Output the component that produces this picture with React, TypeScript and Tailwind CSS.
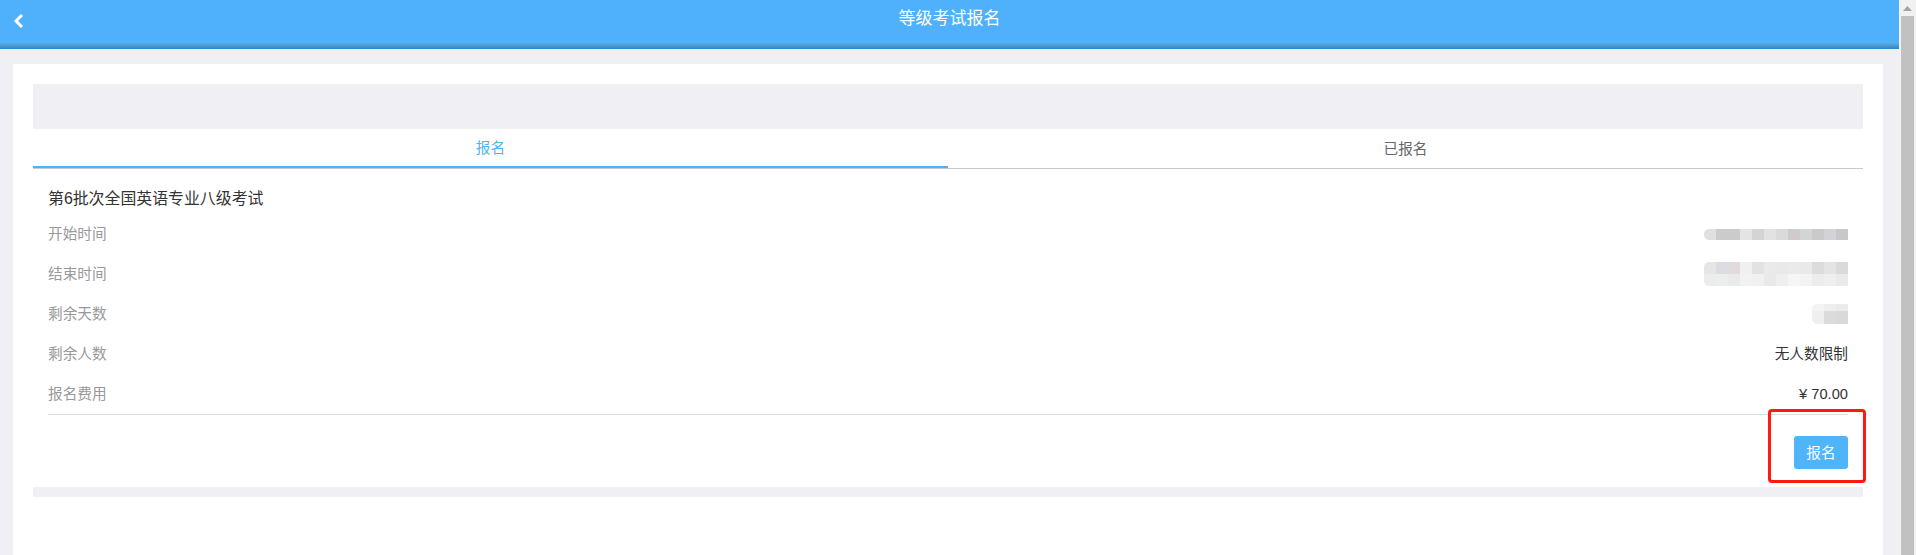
import React from "react"

const FONT = { fontFamily: '"Liberation Sans", "Noto Sans CJK SC", sans-serif' }

// blurred values in the screenshot, cell colours read off the reference
const START_TIME = [["#e2dfdc", "#cbcbcb", "#cbcbcb", "#e3e4e6", "#d3d5d5", "#e1e2e4", "#d9dbdb", "#d0cbc9", "#d3d4d4", "#c9cbcb", "#d2d3d6", "#c6c8ca"]]
const END_TIME = [
  ["#e8e6e5", "#dcdde0", "#dfdcdb", "#eef1f0", "#e1e3e3", "#e9eaea", "#e8eaea", "#e9eaea", "#e7e9ea", "#dcdcdc", "#e3e5e5", "#d9dadb"],
  ["#ececec", "#eceeed", "#e9ebeb", "#f1f3f2", "#f1f1f0", "#e9e9ea", "#efefef", "#f6f6f5", "#f3f3f3", "#ececec", "#efefef", "#e9eaea"],
]
const DAYS = [
  ["#f3f3f3", "#eeeeee", "#ebebeb"],
  ["#efefef", "#dcdbda", "#d8d9db"],
]

function Mosaic({ rows, heights }: { rows: string[][]; heights: number[] }) {
  return (
    <div className="flex flex-col rounded-l-[5px] overflow-hidden">
      {rows.map((row, i) => (
        <div key={i} className="flex">
          {row.map((c, j) => (
            <span key={j} className="block w-[12px]" style={{ background: c, height: heights[i] }} />
          ))}
        </div>
      ))}
    </div>
  )
}

function Row({ label, children }: { label: string; children: React.ReactNode }) {
  return (
    <div className="flex h-[40px] items-center justify-between">
      <span className="text-[14.67px] text-[#999999]">{label}</span>
      {children}
    </div>
  )
}

export default function App() {
  return (
    <div className="flex h-[555px] w-[1916px] overflow-hidden bg-[#efeff4]" style={FONT}>
      <div className="flex flex-1 flex-col">
        {/* header */}
        <div className="relative h-[43px] bg-[#4fb1fc]">
          <svg className="absolute left-[12px] top-[13px]" width="13" height="16" viewBox="0 0 13 16">
            <path d="M10 2 L4 8 L10 14" fill="none" stroke="#ffffff" strokeWidth="3" />
          </svg>
          <div className="text-center text-[17px] leading-[38px] text-white">等级考试报名</div>
        </div>
        <div className="h-[6px] bg-gradient-to-b from-[#66a8d4] to-[#1a88d6]" />

        <div className="flex flex-1 flex-col pl-[13px] pr-[16px] pt-[15px]">
          <div className="flex flex-1 flex-col bg-white px-[20px] pt-[20px]">
            <div className="h-[45px] bg-[#efeff4]" />

            {/* tabs */}
            <div className="flex border-b border-[#c8c8c8]">
              <div className="flex h-[39px] flex-1 items-center justify-center border-b-[2.5px] border-[#4fb1f7] text-[14.67px] text-[#4fb1f7]">
                报名
              </div>
              <div className="flex h-[39px] flex-1 items-center justify-center text-[14.67px] text-[#666666]">
                已报名
              </div>
            </div>

            <div className="px-[15px]">
              <div className="mt-[15px] text-[15.9px] font-normal leading-[30px] text-[#333333]">第6批次全国英语专业八级考试</div>
              <div className="border-b border-[#dcdcdc]">
                <Row label="开始时间">
                  <Mosaic rows={START_TIME} heights={[11]} />
                </Row>
                <Row label="结束时间">
                  <Mosaic rows={END_TIME} heights={[12, 12]} />
                </Row>
                <Row label="剩余天数">
                  <Mosaic rows={DAYS} heights={[7, 13]} />
                </Row>
                <Row label="剩余人数">
                  <span className="text-[14.67px] text-[#333333]">无人数限制</span>
                </Row>
                <Row label="报名费用">
                  <span className="text-[14.67px] text-[#333333]">¥ 70.00</span>
                </Row>
              </div>
              <div className="flex justify-end pb-[18px] pt-[21px]">
                <div className="relative">
                  <button className="h-[33px] w-[54px] rounded-[3px] bg-[#50b4f8] text-[14.67px] text-white">报名</button>
                  <div className="pointer-events-none absolute -bottom-[14px] -left-[26px] -right-[18px] -top-[27px] rounded-[4px] border-[3px] border-[#ff1a10]" />
                </div>
              </div>
            </div>
            <div className="h-[10px] bg-[#efeff4]" />
          </div>
        </div>
      </div>

      {/* scrollbar */}
      <div className="flex w-[17px] flex-col items-center bg-[#f1f1f1]">
        <div className="flex h-[16px] w-full items-center justify-center">
          <svg width="9" height="5" viewBox="0 0 9 5">
            <path d="M0 5 L4.5 0 L9 5 Z" fill="#a3a3a3" />
          </svg>
        </div>
        <div className="w-[13px] flex-1 bg-[#c1c1c1]" />
      </div>
    </div>
  )
}
